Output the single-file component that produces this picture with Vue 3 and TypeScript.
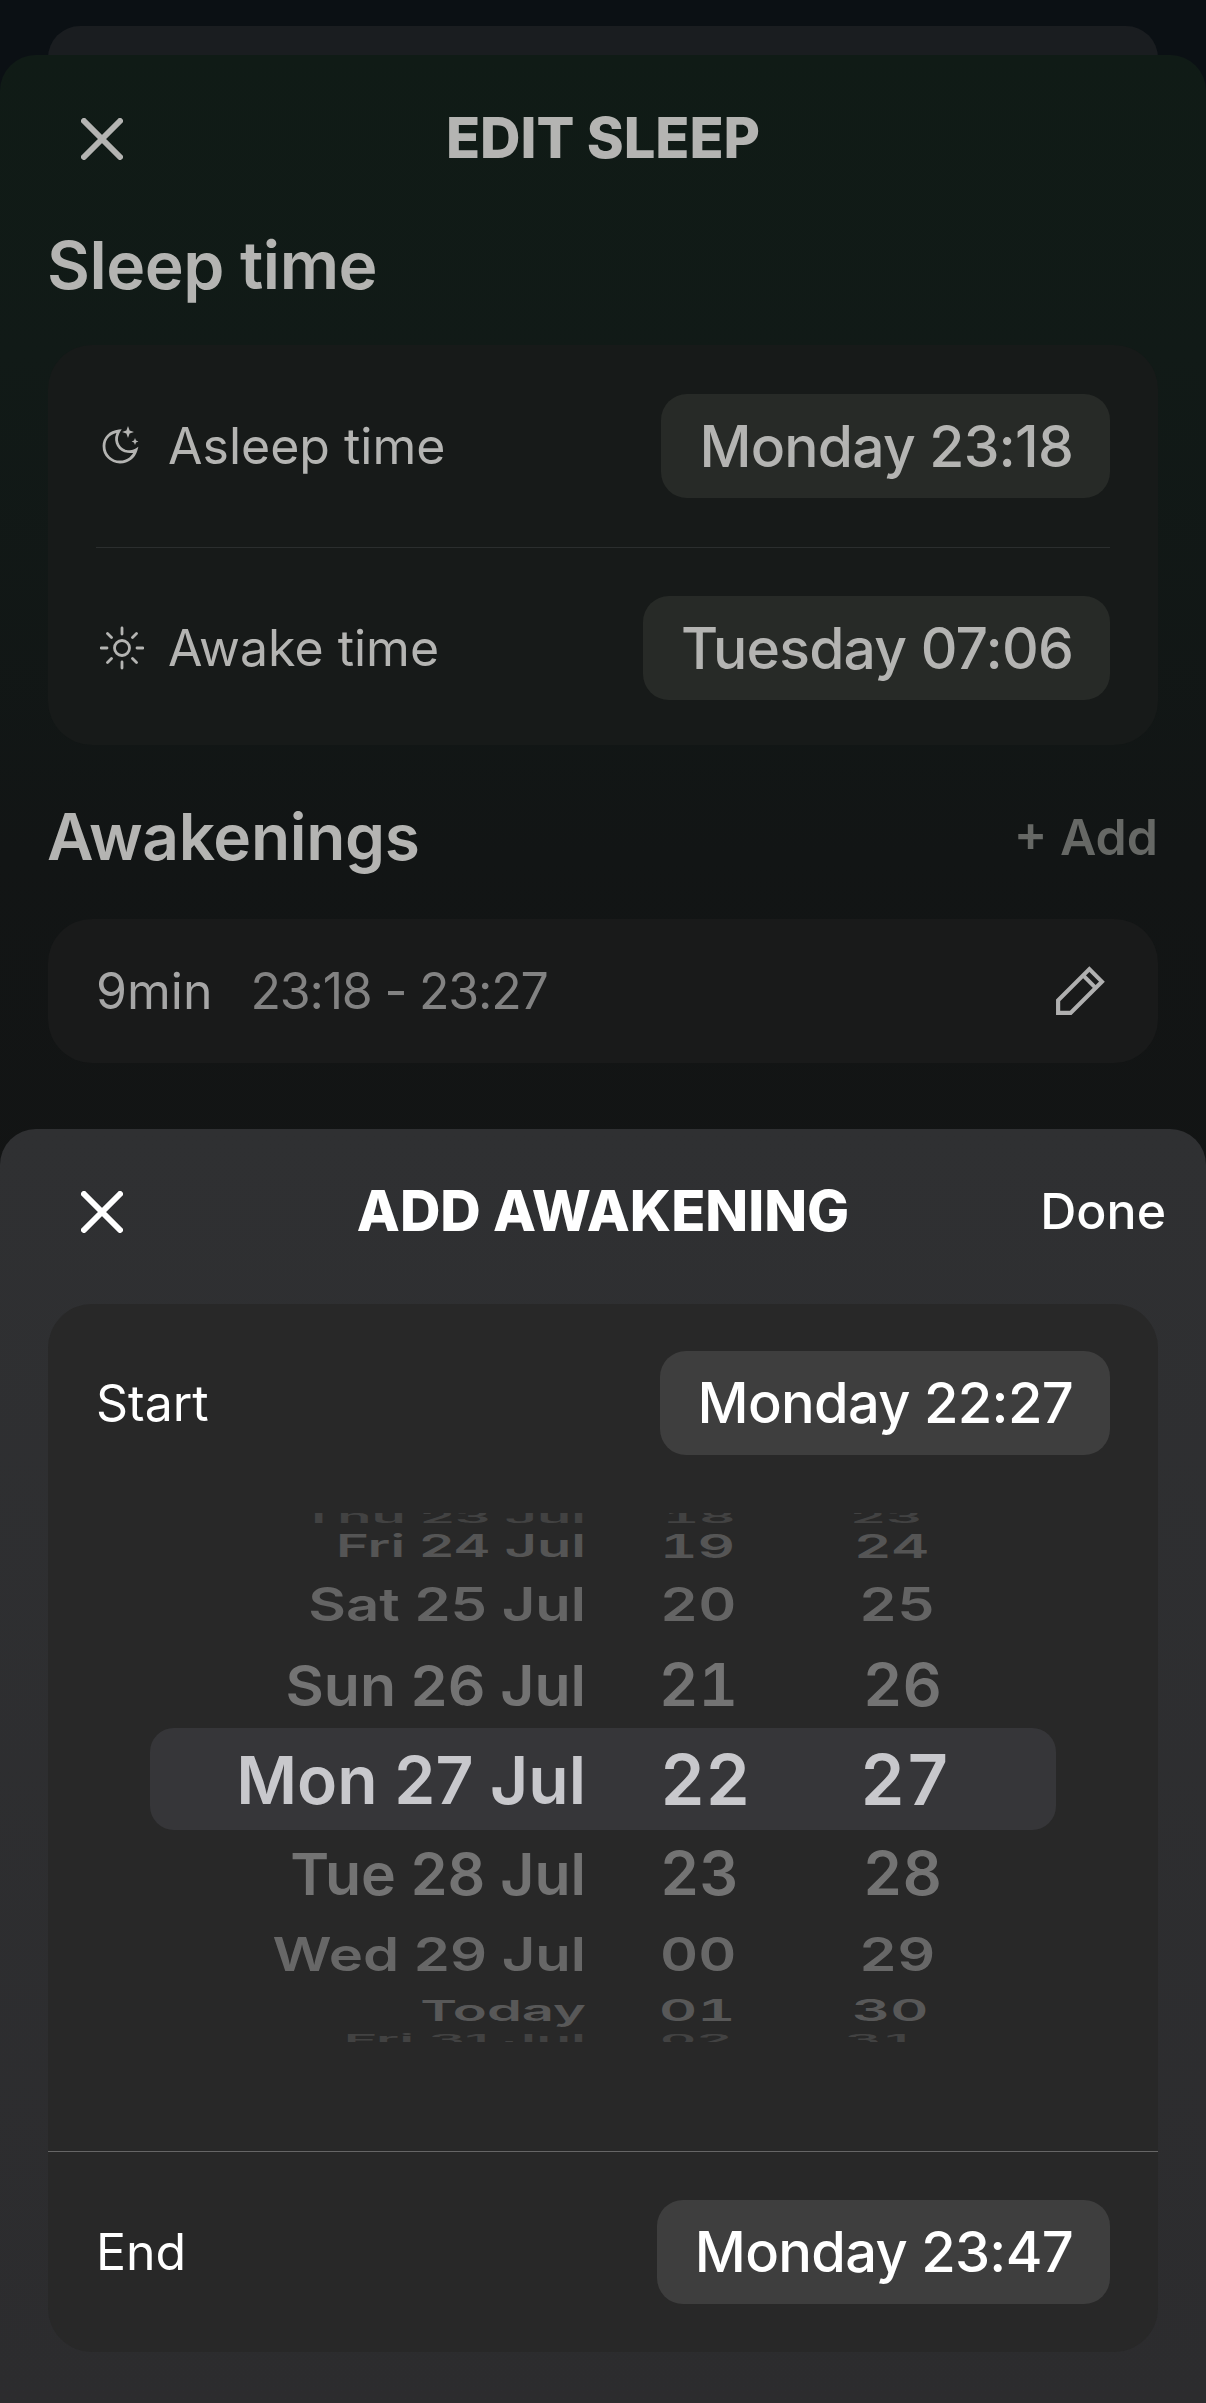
<template>
  <div class="screen">
    <div class="back-card"></div>

    <section class="sheet edit">
      <header class="bar">
        <svg class="close" viewBox="0 0 42 42"><path d="M3 3 39 39M39 3 3 39" /></svg>
        <h1>EDIT SLEEP</h1>
      </header>

      <h2 class="heading first">Sleep time</h2>
      <div class="card times">
        <div class="row">
          <span class="label">
            <svg class="icon" viewBox="0 0 44 44">
              <path class="line" d="M19 7C10 8 4 14 4 22c0 9 7 16 16 16 8 0 14-5 16-12-3 2-7 2-11 1-8-3-11-12-6-20Z" />
              <path class="fill" d="M28 2l1.600 4.400L34 8l-4.400 1.600L28 14l-1.600-4.400L22 8l4.400-1.600ZM35 14l1 2.400L38.400 17.500 36 18.600 35 21l-1-2.400-2.400-1.100 2.400-1.100Z" />
            </svg>
            Asleep time
          </span>
          <span class="pill">Monday 23:18</span>
        </div>
        <div class="rule"></div>
        <div class="row">
          <span class="label">
            <svg class="icon" viewBox="0 0 44 44">
              <circle class="line" cx="22" cy="22" r="7.500" />
              <path class="line" d="M22 2v6M22 36v6M1 22h6M37 22h6M7.500 7.500l4 4M32.500 32.500l4 4M7.500 36.500l4-4M32.500 11.500l4-4" />
            </svg>
            Awake time
          </span>
          <span class="pill">Tuesday 07:06</span>
        </div>
      </div>

      <div class="section-head">
        <h2 class="heading second">Awakenings</h2>
        <span class="add">+ Add</span>
      </div>
      <div class="card entry">
        <span class="mins">9min</span>
        <span class="range">23:18 - 23:27</span>
        <svg class="pencil" viewBox="0 0 48 48">
          <path d="M3 45V33L33 3 45 15 15 45ZM27 9l12 12" />
        </svg>
      </div>
    </section>

    <section class="sheet add-sheet">
      <header class="bar">
        <svg class="close" viewBox="0 0 42 42"><path d="M3 3 39 39M39 3 3 39" /></svg>
        <h1>ADD AWAKENING</h1>
        <span class="done">Done</span>
      </header>

      <div class="card form">
        <div class="row top">
          <span class="label">Start</span>
          <span class="pill">Monday 22:27</span>
        </div>

        <div class="wheel">
          <div class="band"></div>
          <div
            v-for="r in wheelRows"
            :key="r.date"
            class="wheel-row"
            :class="{ current: r.current }"
            :style="{ height: r.h + 'px', opacity: r.o }"
          >
            <span class="w-date" :style="cell(r, r.dfs)">{{ r.date }}</span>
            <span class="w-hour" :style="[cell(r, r.fs), { marginLeft: r.hx + 'px' }]">{{ r.hour }}</span>
            <span class="w-min" :style="[cell(r, r.fs), { marginLeft: r.mx + 'px' }]">{{ r.min }}</span>
          </div>
        </div>

        <div class="full-rule"></div>
        <div class="row bottom">
          <span class="label">End</span>
          <span class="pill">Monday 23:47</span>
        </div>
      </div>
    </section>
  </div>
</template>

<script setup lang="ts">
interface WheelRow {
  date: string
  hour: string
  min: string
  h: number
  dfs: number
  fs: number
  sy: number
  o: number
  hx: number
  mx: number
  current?: boolean
}

// row heights and scales fake the iOS picker's drum
const wheelRows: WheelRow[] = [
  { date: 'Thu 23 Jul', hour: '18', min: '23', h: 7, dfs: 56, fs: 56, sy: 0.3, o: 0.35, hx: 0, mx: 187 },
  { date: 'Fri 24 Jul', hour: '19', min: '24', h: 52, dfs: 56, fs: 58, sy: 0.56, o: 0.6, hx: -3, mx: 194 },
  { date: 'Sat 25 Jul', hour: '20', min: '25', h: 63, dfs: 58, fs: 59, sy: 0.8, o: 0.8, hx: -3, mx: 199 },
  { date: 'Sun 26 Jul', hour: '21', min: '26', h: 101, dfs: 59, fs: 61, sy: 0.96, o: 1, hx: -4, mx: 204 },
  { date: 'Mon 27 Jul', hour: '22', min: '27', h: 88, dfs: 66, fs: 70, sy: 1.01, o: 1, hx: -3, mx: 200, current: true },
  { date: 'Tue 28 Jul', hour: '23', min: '28', h: 99, dfs: 59, fs: 61, sy: 0.98, o: 1, hx: -3, mx: 203 },
  { date: 'Wed 29 Jul', hour: '00', min: '29', h: 61, dfs: 58, fs: 59, sy: 0.8, o: 0.85, hx: -3, mx: 199 },
  { date: 'Today', hour: '01', min: '30', h: 53, dfs: 56, fs: 59, sy: 0.5, o: 0.65, hx: -4, mx: 193 },
  { date: 'Fri 31 Jul', hour: '02', min: '31', h: 5, dfs: 57, fs: 56, sy: 0.26, o: 0.35, hx: -3, mx: 185 },
]

function cell(r: WheelRow, fs: number) {
  return { fontSize: fs + 'px', transform: `scaleY(${r.sy})` }
}
</script>

<style scoped>
.screen {
  position: relative;
  width: 1206px;
  height: 2403px;
  overflow: hidden;
  background: #0b1014;
  font-family: Inter, "Liberation Sans", sans-serif;
  padding-top: 26px;
  box-sizing: border-box;
}
.back-card {
  height: 60px;
  margin: 0 48px -31px;
  background: #1a1d20;
  border-radius: 32px 32px 0 0;
}
.sheet {
  border-radius: 36px 36px 0 0;
}
.edit {
  position: relative;
  height: 1300px;
  box-sizing: border-box;
  padding: 26px 48px 0;
  background: linear-gradient(#101b16, #111a17 300px, #121515 800px, #131414);
  color: #b4b4b2;
}
.add-sheet {
  position: absolute;
  left: 0;
  right: 0;
  top: 1129px;
  bottom: 0;
  padding: 23px 48px 0;
  background: linear-gradient(#2f3032, #2c2c2e);
  color: #fff;
}
.bar {
  position: relative;
  height: 118px;
  display: flex;
  align-items: center;
  justify-content: center;
}
.edit .bar {
  height: 114px;
}
.bar h1 {
  margin: 0;
  font-size: 56px;
  font-weight: 800;
  line-height: 1;
}
.close {
  position: absolute;
  left: 33px;
  top: 50%;
  width: 42px;
  height: 42px;
  margin-top: -20px;
  fill: none;
  stroke: currentColor;
  stroke-width: 6;
  stroke-linecap: round;
}
.done {
  position: absolute;
  right: -8px;
  top: 50%;
  transform: translateY(-50%);
  font-size: 50px;
  font-weight: 500;
}
.heading {
  margin: 0;
  font-size: 64px;
  font-weight: 600;
  line-height: 72px;
}
.first {
  margin: 34px 0 44px -1px;
  font-size: 66px;
  letter-spacing: -0.5px;
}
.second {
  letter-spacing: -0.3px;
  margin-left: -1px;
}
.card {
  border-radius: 44px;
  background: #171a19;
}
.times {
  padding: 49px 48px 45px;
}
.row {
  display: flex;
  align-items: center;
  justify-content: space-between;
}
.label {
  display: flex;
  align-items: center;
  font-size: 50px;
}
.icon {
  width: 44px;
  height: 44px;
  margin: 0 24px 0 4px;
}
.icon .line {
  fill: none;
  stroke: currentColor;
  stroke-width: 2.800;
  stroke-linecap: round;
}
.icon .fill {
  fill: currentColor;
}
.pill {
  height: 104px;
  box-sizing: border-box;
  padding: 0 37px 0 38px;
  display: flex;
  align-items: center;
  border-radius: 26px;
  font-size: 57px;
  font-weight: 500;
  letter-spacing: -0.8px;
  background: #272a27;
}
.rule {
  height: 1px;
  margin: 49px 0 48px;
  background: #2b2e2e;
}
.section-head {
  margin: 56px 0 46px;
  display: flex;
  align-items: center;
  justify-content: space-between;
}
.add {
  font-size: 50px;
  font-weight: 600;
  color: #666865;
}
.entry {
  display: flex;
  align-items: center;
  height: 144px;
  box-sizing: border-box;
  padding: 0 48px;
  background: #191a1a;
}
.mins {
  font-size: 50px;
  color: #a6a6a6;
  margin-right: 38px;
}
.range {
  font-size: 50px;
  letter-spacing: -1.2px;
  color: #828282;
}
.pencil {
  margin-left: auto;
  margin-right: 5px;
  width: 50px;
  height: 50px;
  fill: none;
  stroke: #b0b0b0;
  stroke-width: 4;
}
.form {
  margin-top: 34px;
  height: 1048px;
  background: #282828;
  padding: 47px 0 0;
  box-sizing: border-box;
}
.row.top {
  padding: 0 48px;
}
.add-sheet .pill {
  background: #3e3e3e;
  font-size: 56px;
  letter-spacing: -0.7px;
}
.wheel {
  position: relative;
  height: 529px;
  margin-top: 58px;
  overflow: hidden;
}
.band {
  position: absolute;
  left: 102px;
  width: 906px;
  top: 215px;
  height: 102px;
  border-radius: 24px;
  background: #363639;
}
.wheel-row {
  position: relative;
  display: flex;
  align-items: center;
  font-weight: 600;
  color: #737373;
  white-space: nowrap;
}
.wheel-row.current {
  color: #c8c8cc;
}
.wheel-row span {
  line-height: 1;
  flex: none;
}
.w-date {
  width: 538px;
  text-align: right;
}
.w-hour,
.w-min {
  font-variant-numeric: tabular-nums;
}
.w-hour {
  width: 0;
  padding-left: 77px;
}
.w-min {
  width: 0;
}
.full-rule {
  height: 1px;
  margin-top: 109px;
  background: #666;
}
.row.bottom {
  padding: 0 48px;
  margin-top: 48px;
}
</style>

<style>
html, body {
  margin: 0;
  background: #0b1014;
}
</style>
